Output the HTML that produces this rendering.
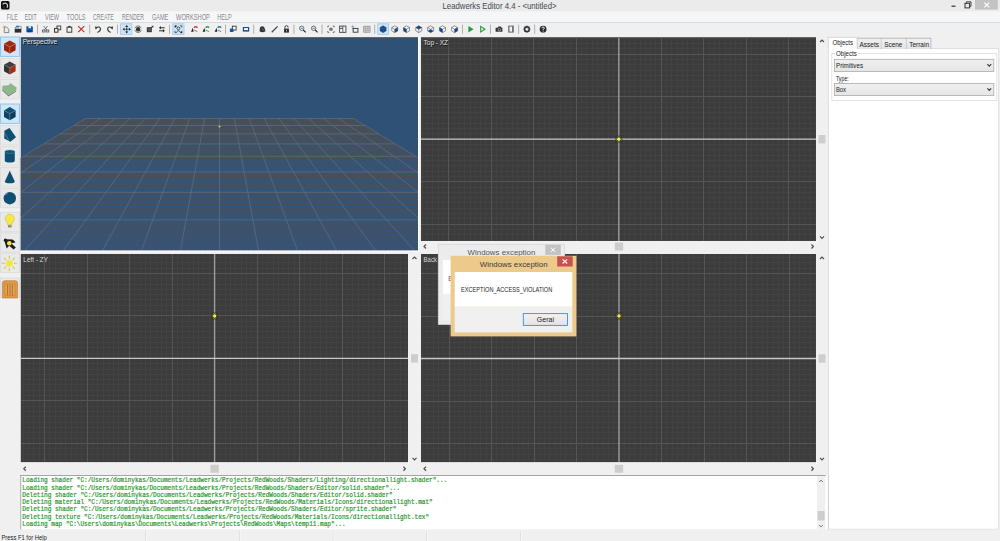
<!DOCTYPE html>
<html><head><meta charset="utf-8"><style>html,body{margin:0;padding:0;width:1000px;height:541px;overflow:hidden;background:#f0f0f0}svg{display:block}</style></head>
<body><svg width="1000" height="541" viewBox="0 0 1000 541">
<rect x="0" y="0" width="1000" height="541" fill="#f0f0f0" />
<rect x="0" y="0" width="1000" height="11.5" fill="#ebebeb" />
<rect x="1" y="1" width="8.5" height="8.5" rx="1.5" fill="#111"/>
<path d="M2.6 4.4 Q5.4 1.8 7.4 4.6 Q7.8 6 7 7.8" stroke="#cfcfcf" stroke-width="1.2" fill="none"/><path d="M3 8.6 V6 H4.6 V8.6" fill="#333"/>
<text x="442.5" y="8.9" font-family="'Liberation Sans', sans-serif" font-size="8.4" fill="#434a55" textLength="114" lengthAdjust="spacingAndGlyphs" >Leadwerks Editor 4.4 - &lt;untitled&gt;</text>
<rect x="951.5" y="5.6" width="4" height="1.2" fill="#333" />
<rect x="965" y="3.3" width="4.6" height="4.6" fill="none" stroke="#333" stroke-width="1"/>
<path d="M966.5 3.3 V1.8 H971 V6.3 H969.6" fill="none" stroke="#333" stroke-width="0.9"/>
<rect x="975" y="0" width="22.8" height="9.6" fill="#c3c3c3" />
<path d="M984.3 2.6 L989.2 7.4 M989.2 2.6 L984.3 7.4" stroke="#fff" stroke-width="1.1"/>
<rect x="0" y="11.5" width="1000" height="10.7" fill="#f5f6f7" />
<rect x="0" y="22" width="1000" height="1" fill="#dadbdc" />
<text x="6.8" y="19.7" font-family="'Liberation Sans', sans-serif" font-size="8.4" fill="#878791" textLength="10.8" lengthAdjust="spacingAndGlyphs" >FILE</text>
<text x="24.8" y="19.7" font-family="'Liberation Sans', sans-serif" font-size="8.4" fill="#878791" textLength="12.0" lengthAdjust="spacingAndGlyphs" >EDIT</text>
<text x="45" y="19.7" font-family="'Liberation Sans', sans-serif" font-size="8.4" fill="#878791" textLength="14" lengthAdjust="spacingAndGlyphs" >VIEW</text>
<text x="66.6" y="19.7" font-family="'Liberation Sans', sans-serif" font-size="8.4" fill="#878791" textLength="18.9" lengthAdjust="spacingAndGlyphs" >TOOLS</text>
<text x="93" y="19.7" font-family="'Liberation Sans', sans-serif" font-size="8.4" fill="#878791" textLength="20.8" lengthAdjust="spacingAndGlyphs" >CREATE</text>
<text x="122" y="19.7" font-family="'Liberation Sans', sans-serif" font-size="8.4" fill="#878791" textLength="22.1" lengthAdjust="spacingAndGlyphs" >RENDER</text>
<text x="151.9" y="19.7" font-family="'Liberation Sans', sans-serif" font-size="8.4" fill="#878791" textLength="16.4" lengthAdjust="spacingAndGlyphs" >GAME</text>
<text x="176" y="19.7" font-family="'Liberation Sans', sans-serif" font-size="8.4" fill="#878791" textLength="33.9" lengthAdjust="spacingAndGlyphs" >WORKSHOP</text>
<text x="217.3" y="19.7" font-family="'Liberation Sans', sans-serif" font-size="8.4" fill="#878791" textLength="14.3" lengthAdjust="spacingAndGlyphs" >HELP</text>
<rect x="37.0" y="24.6" width="0.9" height="9.2" fill="#a9a9a9" />
<rect x="89.25" y="24.6" width="0.9" height="9.2" fill="#a9a9a9" />
<rect x="117.1" y="24.6" width="0.9" height="9.2" fill="#a9a9a9" />
<rect x="169.1" y="24.6" width="0.9" height="9.2" fill="#a9a9a9" />
<rect x="225.1" y="24.6" width="0.9" height="9.2" fill="#a9a9a9" />
<rect x="253.25" y="24.6" width="0.9" height="9.2" fill="#a9a9a9" />
<rect x="293.5" y="24.6" width="0.9" height="9.2" fill="#a9a9a9" />
<rect x="321.6" y="24.6" width="0.9" height="9.2" fill="#a9a9a9" />
<rect x="374.25" y="24.6" width="0.9" height="9.2" fill="#a9a9a9" />
<rect x="462.0" y="24.6" width="0.9" height="9.2" fill="#a9a9a9" />
<rect x="490.1" y="24.6" width="0.9" height="9.2" fill="#a9a9a9" />
<rect x="518.25" y="24.6" width="0.9" height="9.2" fill="#a9a9a9" />
<rect x="534.25" y="24.6" width="0.9" height="9.2" fill="#a9a9a9" />
<rect x="120.6" y="23.8" width="11.200000000000017" height="10.6" fill="#cce4f7" stroke="#99c9ef" stroke-width="0.8"/>
<rect x="172.8" y="23.8" width="11.199999999999989" height="10.6" fill="#cce4f7" stroke="#99c9ef" stroke-width="0.8"/>
<rect x="377.7" y="23.8" width="10.699999999999989" height="10.6" fill="#cce4f7" stroke="#99c9ef" stroke-width="0.8"/>
<g transform="translate(6,29.2)"><path d="M-1.6 -2.2 H0.6 L2.8 0 V3.4 H-1.8 Z" fill="#ececec" stroke="#7a7a7a" stroke-width="0.9"/><path d="M-3.4 -1.6 L-2 -2.2 M-2.6 -3.6 L-2.2 -2.4 M-0.8 -3.4 L-1.4 -2.2" stroke="#e2a84a" stroke-width="0.8"/></g>
<g transform="translate(18.1,29.2)"><rect x="0" y="-3" width="3" height="3.4" fill="#f4f4f4" stroke="#777" stroke-width="0.7"/><path d="M-3.4 -0.4 H3.2 V3.4 H-3.4 Z" fill="#2e2e2e"/><path d="M-3 -0.8 L-0.8 -3.2" stroke="#3a86d6" stroke-width="1.3"/><circle cx="-0.4" cy="-2.8" r="0.9" fill="#1f6fc6"/></g>
<g transform="translate(29.6,29.2)"><path d="M-3.2 -3 H2.5 L3.3 -2.2 V3 H-3.2 Z" fill="#1456a8"/><rect x="-1.2" y="-3" width="2.6" height="2" fill="#e6eef8"/><rect x="-2" y="0.8" width="4" height="2.2" fill="#0d3f80"/></g>
<g transform="translate(45.6,29.2)"><path d="M-2 -3.2 L1.4 1 M2 -3.2 L-1.4 1" stroke="#555" stroke-width="0.8"/><rect x="-3.2" y="0.8" width="2.6" height="2" fill="none" stroke="#555" stroke-width="0.8"/><rect x="0.6" y="0.8" width="2.6" height="2" fill="none" stroke="#555" stroke-width="0.8"/></g>
<g transform="translate(57.75,29.2)"><rect x="-0.8" y="-3.2" width="3.8" height="3.8" fill="none" stroke="#333" stroke-width="0.9"/><rect x="-3.2" y="-0.8" width="3.4" height="3.8" fill="#f0f0f0" stroke="#333" stroke-width="1"/></g>
<g transform="translate(69.4,29.2)"><rect x="-2.4" y="-2" width="4.8" height="5" fill="none" stroke="#333" stroke-width="0.9"/><rect x="-1.2" y="-3.3" width="2.4" height="1.4" fill="#333"/></g>
<g transform="translate(81.25,29.2)"><path d="M-3 -3 L3 3 M3 -3 L-3 3" stroke="#c0311f" stroke-width="1.2"/></g>
<g transform="translate(98.1,29.2)"><path d="M-2.4 -1.6 Q1.8 -3.4 2.4 -0.4 Q2.4 2 -0.6 3.2" fill="none" stroke="#333" stroke-width="1.1"/><path d="M-3 -3 L-2.6 0.2 L-0.4 -1.4 Z" fill="#333"/></g>
<g transform="translate(110,29.2)"><path d="M2.4 -1.6 Q-1.8 -3.4 -2.4 -0.4 Q-2.4 2 0.6 3.2" fill="none" stroke="#333" stroke-width="1.1"/><path d="M3 -3 L2.6 0.2 L0.4 -1.4 Z" fill="#333"/></g>
<g transform="translate(126.7,29.2)"><path d="M0 -3 V3 M-3 0 H3" stroke="#333" stroke-width="0.6"/><path d="M0 -4.2 L-1.5 -2.2 H1.5Z M0 4.2 L-1.5 2.2 H1.5Z M-4.2 0 L-2.2 -1.5 V1.5Z M4.2 0 L2.2 -1.5 V1.5Z" fill="#2a2a2a"/><circle cx="0" cy="0" r="0.8" fill="#2a2a2a"/></g>
<g transform="translate(138.1,29.2)"><circle cx="0" cy="0" r="2.2" fill="#333"/><path d="M-3.2 -1 A3.4 3.4 0 0 1 3.2 -1 M3.2 1 A3.4 3.4 0 0 1 -3.2 1" fill="none" stroke="#555" stroke-width="0.8"/></g>
<g transform="translate(150,29.2)"><rect x="-3.2" y="-2" width="5" height="5" fill="#333"/><rect x="-2.4" y="-1.2" width="3.4" height="3.4" fill="#555"/><path d="M0.5 -0.6 L3 -3" stroke="#333" stroke-width="0.9"/><path d="M3.4 -3.4 L1.2 -3.2 L3.2 -1.2Z" fill="#333"/></g>
<g transform="translate(161.9,29.2)"><path d="M-1.4 -1.4 H2.8 M1.4 1.6 H-2.8" stroke="#2a2a2a" stroke-width="1"/><path d="M-3 -1.4 L-1 -3.2 V0.4Z M3 1.6 L1 -0.2 V3.4Z" fill="#2a2a2a"/></g>
<g transform="translate(178.4,29.2)"><path d="M-3.4 -1.6 V-3.4 H-1.6 M1.6 -3.4 H3.4 V-1.6 M3.4 1.6 V3.4 H1.6 M-1.6 3.4 H-3.4 V1.6" fill="none" stroke="#3a3a3a" stroke-width="0.8"/><path d="M-3.4 -3.4 L-2.2 -2.2" stroke="#222" stroke-width="1.2"/><circle cx="0" cy="-0.9" r="1.4" fill="none" stroke="#333" stroke-width="0.8"/><path d="M-1.8 2.6 Q0 0.2 1.8 2.6" fill="none" stroke="#333" stroke-width="0.8"/><path d="M2.4 2.4 L3.6 3.6" stroke="#222" stroke-width="1.2"/></g>
<g transform="translate(194.4,29.2)"><path d="M-3.4 2.6 L-1.6 -1.4 L-0.8 2.6Z" fill="#222"/><path d="M-0.6 0.8 L3 2.4" stroke="#666" stroke-width="0.8"/><path d="M-0.4 -1.4 Q1.4 -3.4 3.2 -1.6" fill="none" stroke="#d23a2a" stroke-width="1.3"/></g>
<g transform="translate(206,29.2)"><path d="M-3.4 2.6 L-1.6 -1.4 L-0.8 2.6Z" fill="#222"/><path d="M-0.6 0.8 L3 2.4" stroke="#666" stroke-width="0.8"/><path d="M-0.4 -1.4 Q1.4 -3.4 3.2 -1.6" fill="none" stroke="#2ea043" stroke-width="1.3"/></g>
<g transform="translate(218.1,29.2)"><path d="M-3.4 2.6 L-1.6 -1.4 L-0.8 2.6Z" fill="#222"/><path d="M-0.6 0.8 L3 2.4" stroke="#666" stroke-width="0.8"/><path d="M-0.4 -1.4 Q1.4 -3.4 3.2 -1.6" fill="none" stroke="#2a74c8" stroke-width="1.3"/></g>
<g transform="translate(233.1,29.2)"><rect x="-0.8" y="-3" width="3.8" height="3.8" fill="#fff" stroke="#333" stroke-width="0.9"/><rect x="-3.2" y="-0.6" width="3.6" height="3.4" fill="#1456a8"/></g>
<g transform="translate(246,29.2)"><rect x="-3.2" y="-2.2" width="6.4" height="4.6" fill="#1a4e86"/><rect x="-2" y="-1.1" width="4" height="2" fill="#fff"/></g>
<g transform="translate(262.5,29.2)"><path d="M-2.4 -2 Q0 -4 2 -1.5 L3 2 Q0 4 -3 2 Z" fill="#333"/><path d="M-1 -1 L2 1.6" stroke="#888" stroke-width="0.7"/></g>
<g transform="translate(274.75,29.2)"><path d="M-3 3 L1.6 -1.6" stroke="#444" stroke-width="1.3"/><path d="M1 -1.8 L2.6 -3.2 L3.2 -2.6 L1.8 -1Z" fill="#333"/></g>
<g transform="translate(286.5,29.2)"><path d="M-1.6 -0.6 V-2 Q-1.6 -3.6 0 -3.6 Q1.6 -3.6 1.6 -2 V-1.6" fill="none" stroke="#333" stroke-width="0.9"/><rect x="-2.4" y="-0.6" width="4.8" height="4" fill="#2a2a2a"/><rect x="-0.4" y="0.6" width="0.8" height="1.6" fill="#ddd"/></g>
<g transform="translate(302.5,29.2)"><circle cx="-0.8" cy="-0.9" r="2.2" fill="#e8eef6" stroke="#555" stroke-width="0.8"/><path d="M0.8 0.8 L3.2 3.2" stroke="#333" stroke-width="1.2"/><path d="M-2 -0.9 H0.4" stroke="#2a74c8" stroke-width="0.8"/></g>
<g transform="translate(314.4,29.2)"><circle cx="-0.8" cy="-0.9" r="2.2" fill="#e8eef6" stroke="#555" stroke-width="0.8"/><path d="M0.8 0.8 L3.2 3.2" stroke="#333" stroke-width="1.2"/><path d="M-2 -0.9 H0.4" stroke="#2a74c8" stroke-width="0.8"/></g>
<g transform="translate(331,29.2)"><path d="M-3.2 -1.8 V-3.2 H-1.8 M1.8 -3.2 H3.2 V-1.8 M3.2 1.8 V3.2 H1.8 M-1.8 3.2 H-3.2 V1.8" fill="none" stroke="#555" stroke-width="0.8"/><circle cx="0" cy="0" r="1.8" fill="#777"/></g>
<g transform="translate(342.75,29.2)"><rect x="-3.6" y="-3.6" width="7.2" height="7.2" fill="#444"/><rect x="-2.7" y="-2.7" width="2.4" height="1.6" fill="#ddd"/><rect x="-2.7" y="-0.3" width="2.4" height="3" fill="#f4f4f4"/><rect x="0.5" y="-2.7" width="2.2" height="5.4" fill="#f4f4f4"/></g>
<g transform="translate(354.75,29.2)"><rect x="-1.6" y="-0.8" width="4.8" height="3.8" fill="none" stroke="#333" stroke-width="0.9"/><path d="M-3.2 -2.6 Q-2 -3.8 -1.2 -2.6 Q-1.4 -1.8 -2.2 -1.4 V-0.6" fill="none" stroke="#2a74c8" stroke-width="0.9"/></g>
<g transform="translate(366.9,29.2)"><rect x="-3.2" y="-3" width="6.4" height="6" fill="#ddd" stroke="#888" stroke-width="0.7"/><path d="M-1.1 -3 V3 M1.1 -3 V3 M-3.2 -1 H3.2 M-3.2 1 H3.2" stroke="#888" stroke-width="0.5"/></g>
<g transform="translate(383.1,29.2)"><path d="M0 -3.4 L3 -1.7 V1.7 L0 3.4 L-3 1.7 V-1.7Z" fill="#f4f4f4" stroke="#555" stroke-width="0.6"/><path d="M0 -3.4 L3 -1.7 L0 0 L-3 -1.7Z" fill="#0a4a9a"/><path d="M3 -1.7 V1.7 L0 3.4 V0Z" fill="#0a4a9a"/><path d="M-3 -1.7 L0 0 V3.4 L-3 1.7Z" fill="#0a4a9a"/><path d="M0 0 V3.4 M0 0 L-3 -1.7 M0 0 L3 -1.7" stroke="#444" stroke-width="0.5"/></g>
<g transform="translate(394.75,29.2)"><path d="M0 -3.4 L3 -1.7 V1.7 L0 3.4 L-3 1.7 V-1.7Z" fill="#f4f4f4" stroke="#555" stroke-width="0.6"/><path d="M3 -1.7 V1.7 L0 3.4 V0Z" fill="#0a4a9a"/><path d="M0 0 V3.4 M0 0 L-3 -1.7 M0 0 L3 -1.7" stroke="#444" stroke-width="0.5"/></g>
<g transform="translate(406.5,29.2)"><path d="M0 -3.4 L3 -1.7 V1.7 L0 3.4 L-3 1.7 V-1.7Z" fill="#f4f4f4" stroke="#555" stroke-width="0.6"/><path d="M-3 -1.7 L0 0 V3.4 L-3 1.7Z" fill="#0a4a9a"/><path d="M0 0 V3.4 M0 0 L-3 -1.7 M0 0 L3 -1.7" stroke="#444" stroke-width="0.5"/></g>
<g transform="translate(418.75,29.2)"><path d="M0 -3.4 L3 -1.7 V1.7 L0 3.4 L-3 1.7 V-1.7Z" fill="#f4f4f4" stroke="#555" stroke-width="0.6"/><path d="M0 -3.4 L3 -1.7 L0 0 L-3 -1.7Z" fill="#0a4a9a"/><path d="M0 0 V3.4 M0 0 L-3 -1.7 M0 0 L3 -1.7" stroke="#444" stroke-width="0.5"/></g>
<g transform="translate(430.6,29.2)"><path d="M0 -3.4 L3 -1.7 V1.7 L0 3.4 L-3 1.7 V-1.7Z" fill="#f4f4f4" stroke="#555" stroke-width="0.6"/><path d="M0 0 L3 1.7 L0 3.4 L-3 1.7Z" fill="#0a4a9a"/><path d="M0 0 V3.4 M0 0 L-3 -1.7 M0 0 L3 -1.7" stroke="#444" stroke-width="0.5"/></g>
<g transform="translate(442.5,29.2)"><path d="M0 -3.4 L3 -1.7 V1.7 L0 3.4 L-3 1.7 V-1.7Z" fill="#f4f4f4" stroke="#555" stroke-width="0.6"/><path d="M-3 -1.7 L0 0 V3.4 L-3 1.7Z" fill="#0a4a9a"/><path d="M0 0 V3.4 M0 0 L-3 -1.7 M0 0 L3 -1.7" stroke="#444" stroke-width="0.5"/></g>
<g transform="translate(454.6,29.2)"><path d="M0 -3.4 L3 -1.7 V1.7 L0 3.4 L-3 1.7 V-1.7Z" fill="#f4f4f4" stroke="#555" stroke-width="0.6"/><path d="M3 -1.7 V1.7 L0 3.4 V0Z" fill="#0a4a9a"/><path d="M0 0 V3.4 M0 0 L-3 -1.7 M0 0 L3 -1.7" stroke="#444" stroke-width="0.5"/></g>
<g transform="translate(470.6,29.2)"><path d="M-2.2 -3.2 L3 0 L-2.2 3.2Z" fill="#2a9a3a"/></g>
<g transform="translate(482.5,29.2)"><path d="M-1.8 -2.8 L2.4 0 L-1.8 2.8Z" fill="none" stroke="#2a9a3a" stroke-width="1.1"/></g>
<g transform="translate(499,29.2)"><path d="M-3.4 -1.4 H-1.4 L-0.6 -2.6 H1.8 L2.6 -1.4 H3.4 V2.6 H-3.4Z" fill="#333"/><circle cx="0.4" cy="0.6" r="1.3" fill="none" stroke="#ccc" stroke-width="0.6"/></g>
<g transform="translate(511,29.2)"><rect x="-2.8" y="-3.6" width="5.6" height="7" fill="#6a6a6a"/><rect x="-1.5" y="-2.6" width="2.6" height="5" fill="#f2f2f2"/></g>
<g transform="translate(526.9,29.2)"><circle cx="0" cy="0" r="2.4" fill="none" stroke="#333" stroke-width="1.4"/><path d="M0 -3.6 V3.6 M-3.6 0 H3.6 M-2.5 -2.5 L2.5 2.5 M2.5 -2.5 L-2.5 2.5" stroke="#333" stroke-width="0.9"/><circle cx="0" cy="0" r="1.2" fill="#eee"/></g>
<g transform="translate(543.1,29.2)"><circle cx="0" cy="0" r="3.4" fill="#2a2a2a"/><path d="M-1.2 -1 Q-1.2 -2.2 0 -2.2 Q1.3 -2.2 1.2 -1 Q1.1 -0.2 0 0.3 V0.9" fill="none" stroke="#fff" stroke-width="0.9"/><rect x="-0.45" y="1.5" width="0.9" height="0.9" fill="#fff"/></g>
<rect x="0.5" y="37" width="19" height="19.4" fill="#cfe5f8" stroke="#94c5ec" stroke-width="1"/>
<rect x="0.5" y="58.3" width="19" height="19.4" fill="#e9e9e9" stroke="#dcdcdc" stroke-width="0.9"/>
<rect x="0.5" y="79.5" width="19" height="19.4" fill="#e9e9e9" stroke="#dcdcdc" stroke-width="0.9"/>
<rect x="0.5" y="104" width="19" height="19.4" fill="#cfe5f8" stroke="#94c5ec" stroke-width="1"/>
<rect x="0.5" y="125.5" width="19" height="19.4" fill="#e9e9e9" stroke="#dcdcdc" stroke-width="0.9"/>
<rect x="0.5" y="146.5" width="19" height="19.4" fill="#e9e9e9" stroke="#dcdcdc" stroke-width="0.9"/>
<rect x="0.5" y="167.5" width="19" height="19.4" fill="#e9e9e9" stroke="#dcdcdc" stroke-width="0.9"/>
<rect x="0.5" y="188.3" width="19" height="19.4" fill="#e9e9e9" stroke="#dcdcdc" stroke-width="0.9"/>
<rect x="0.5" y="212.3" width="19" height="19.4" fill="#e9e9e9" stroke="#dcdcdc" stroke-width="0.9"/>
<rect x="0.5" y="232.8" width="19" height="19.4" fill="#e9e9e9" stroke="#dcdcdc" stroke-width="0.9"/>
<rect x="0.5" y="253" width="19" height="19.4" fill="#e9e9e9" stroke="#dcdcdc" stroke-width="0.9"/>
<rect x="0.5" y="278" width="19" height="19.4" fill="#e9e9e9" stroke="#dcdcdc" stroke-width="0.9"/>
<g transform="translate(9.8,47.0)"><path d="M0 -6.6 L5.8 -3.3 L0 0.0 L-5.8 -3.3Z" fill="#a32810"/><path d="M-5.8 -3.3 L0 0.0 V6.6 L-5.8 3.3Z" fill="#9c240c"/><path d="M5.8 -3.3 L0 0.0 V6.6 L5.8 3.3Z" fill="#952209"/><path d="M0 0.0 V6.6 M0 0.0 L-5.8 -3.3 M0 0.0 L5.8 -3.3" stroke="#d88a78" stroke-width="0.4"/></g>
<g transform="translate(9.8,68.0)"><path d="M0 -6.6 L5.8 -3.3 L0 0.0 L-5.8 -3.3Z" fill="#3f3f3f"/><path d="M-5.8 -3.3 L0 0.0 V6.6 L-5.8 3.3Z" fill="#333"/><path d="M5.8 -3.3 L0 0.0 V6.6 L5.8 3.3Z" fill="#a82a14"/><path d="M0 0.0 V6.6 M0 0.0 L-5.8 -3.3 M0 0.0 L5.8 -3.3" stroke="#888" stroke-width="0.4"/></g>
<g transform="translate(9.8,89.2)"><path d="M-7.6 -0.2 L-7.6 1.4 L-1.3 7.2 L6.1 2.6 L6.9 -1.6 L6.1 1.4 L-1.3 5.9Z" fill="#7a827a"/><path d="M-7.4 -3.5 L-1.3 -3.9 L1 -6.3 L2.4 -4.7 L6.9 -1.6 L6.1 1.4 L-1.3 5.9 L-7.6 -0.2Z" fill="#8bb88b"/></g>
<g transform="translate(9.8,113.7)"><path d="M0 -6.6 L5.8 -3.3 L0 0.0 L-5.8 -3.3Z" fill="#0e4f72"/><path d="M-5.8 -3.3 L0 0.0 V6.6 L-5.8 3.3Z" fill="#0b4262"/><path d="M5.8 -3.3 L0 0.0 V6.6 L5.8 3.3Z" fill="#0a3d5c"/><path d="M0 0.0 V6.6 M0 0.0 L-5.8 -3.3 M0 0.0 L5.8 -3.3" stroke="#6fa2bf" stroke-width="0.4"/></g>
<path d="M4.4 130.7 L9.5 128 L16 137.3 L10.4 141.7 L4.2 138.6 Z" fill="#0e4f72"/><path d="M4.8 132.9 L9 140.9" stroke="#6f9cb4" stroke-width="0.6"/>
<g transform="translate(9.8,156.2)"><path d="M-5 -4.5 V4.5 A5 1.8 0 0 0 5 4.5 V-4.5Z" fill="#0e4f72"/><ellipse cx="0" cy="-4.5" rx="5" ry="1.8" fill="#105678" stroke="#6fa2bf" stroke-width="0.4"/></g>
<g transform="translate(9.8,177.2)"><path d="M0 -6.5 L-5 4.2 A5 1.8 0 0 0 5 4.2Z" fill="#0e4f72"/></g>
<g transform="translate(9.8,198.0)"><circle cx="0" cy="0.2" r="6.2" fill="#0e4f72"/><path d="M-4.6 -2.6 A5.2 5.2 0 0 1 -2 -5" stroke="#9fc4d8" stroke-width="0.7" fill="none"/></g>
<g transform="translate(9.8,222.0)"><path d="M-2 3 Q-2 1 -3.5 -0.5 A4.5 4.5 0 1 1 3.5 -0.5 Q2 1 2 3Z" fill="#f6e84a" stroke="#b8a830" stroke-width="0.4"/><rect x="-1.8" y="3.2" width="3.6" height="2.2" fill="#888"/></g>
<path d="M4 239.2 L12.6 239.6 L15.6 242.2 L11.4 243.6 L15.8 247.6 L13.6 249.6 L9.2 245.8 L6.6 248.6 Z" fill="#1c1c1c"/><circle cx="5.4" cy="240.2" r="1.6" fill="#1c1c1c"/><circle cx="9.3" cy="243.3" r="2.3" fill="#f2e43c"/>
<g transform="translate(9.3,263.3)"><path d="M4.60 0.00 L7.60 0.00" stroke="#d6c840" stroke-width="1.1"/><path d="M3.25 3.25 L5.37 5.37" stroke="#d6c840" stroke-width="1.1"/><path d="M0.00 4.60 L0.00 7.60" stroke="#d6c840" stroke-width="1.1"/><path d="M-3.25 3.25 L-5.37 5.37" stroke="#d6c840" stroke-width="1.1"/><path d="M-4.60 0.00 L-7.60 0.00" stroke="#d6c840" stroke-width="1.1"/><path d="M-3.25 -3.25 L-5.37 -5.37" stroke="#d6c840" stroke-width="1.1"/><path d="M-0.00 -4.60 L-0.00 -7.60" stroke="#d6c840" stroke-width="1.1"/><path d="M3.25 -3.25 L5.37 -5.37" stroke="#d6c840" stroke-width="1.1"/><circle cx="0" cy="0" r="3.4" fill="#f4e640"/></g>
<path d="M2.4 298 V283 Q2.4 280.7 5 280.7 H15 Q17.6 280.7 17.6 283 V298Z" fill="#dd9a48" stroke="#b8782e" stroke-width="0.6"/><rect x="5" y="284" width="10" height="11.3" fill="#e6a656" stroke="#b8782e" stroke-width="0.5"/><path d="M7.6 284.5 V295 M10 284.5 V295 M12.4 284.5 V295" stroke="#a66a28" stroke-width="0.9"/>
<clipPath id="cp"><rect x="20.8" y="37.6" width="397.2" height="212.9"/></clipPath>
<rect x="20.8" y="37.6" width="397.2" height="212.9" fill="#2f5176" />
<g clip-path="url(#cp)">
<path d="M85.40 118.50 L353.60 118.50 L573.82 252.50 L-134.82 252.50Z" fill="#34547a"/>
<path d="M83.76 119.50H355.24M82.11 120.50H356.89M82.11 120.50H356.89M80.47 121.50H358.53M78.82 122.50H360.18M77.18 123.50H361.82M75.54 124.50H363.46M72.25 126.50H366.75M70.61 127.50H368.39M68.96 128.50H370.04M67.32 129.50H371.68M65.68 130.50H373.32M64.03 131.50H374.97M62.39 132.50H376.61M59.10 134.50H379.90M55.82 136.50H383.18M54.17 137.50H384.83M52.53 138.50H386.47M50.89 139.50H388.11M47.60 141.50H391.40M45.96 142.50H393.04M41.03 145.50H397.97M39.38 146.50H399.62M36.10 148.50H402.90M34.45 149.50H404.55M31.17 151.50H407.83M29.52 152.50H409.48M26.24 154.50H412.76M19.66 158.50H419.34M18.02 159.50H420.98M14.73 161.50H424.27M11.45 163.50H427.55M8.16 165.50H430.84M4.87 167.50H434.13M1.59 169.50H437.41M-6.63 174.50H445.63M-9.92 176.50H448.92M-13.21 178.50H452.21M-18.14 181.50H457.14M-21.42 183.50H460.42M-26.35 186.50H465.35M-31.28 189.50H470.28M-41.14 195.50H480.14M-46.07 198.50H485.07M-51.00 201.50H490.00M-55.93 204.50H494.93M-62.51 208.50H501.51M-69.08 212.50H508.08M-74.01 215.50H513.01M-88.80 224.50H527.80M-95.38 228.50H534.38M-101.95 232.50H540.95M-110.17 237.50H549.17M-118.38 242.50H557.38M-126.60 247.50H565.60M87.26 118.50L-129.90 252.50M89.12 118.50L-124.97 252.50M90.99 118.50L-120.05 252.50M92.85 118.50L-115.13 252.50M94.71 118.50L-110.21 252.50M96.57 118.50L-105.29 252.50M98.44 118.50L-100.37 252.50M102.16 118.50L-90.53 252.50M104.02 118.50L-85.61 252.50M105.89 118.50L-80.69 252.50M107.75 118.50L-75.76 252.50M109.61 118.50L-70.84 252.50M111.47 118.50L-65.92 252.50M113.34 118.50L-61.00 252.50M117.06 118.50L-51.16 252.50M118.92 118.50L-46.24 252.50M120.79 118.50L-41.32 252.50M122.65 118.50L-36.40 252.50M124.51 118.50L-31.47 252.50M126.37 118.50L-26.55 252.50M128.24 118.50L-21.63 252.50M131.96 118.50L-11.79 252.50M133.82 118.50L-6.87 252.50M135.69 118.50L-1.95 252.50M137.55 118.50L2.97 252.50M139.41 118.50L7.89 252.50M141.27 118.50L12.82 252.50M143.14 118.50L17.74 252.50M146.86 118.50L27.58 252.50M148.72 118.50L32.50 252.50M150.59 118.50L37.42 252.50M152.45 118.50L42.34 252.50M154.31 118.50L47.26 252.50M156.17 118.50L52.18 252.50M158.04 118.50L57.10 252.50M161.76 118.50L66.95 252.50M163.62 118.50L71.87 252.50M165.49 118.50L76.79 252.50M167.35 118.50L81.71 252.50M169.21 118.50L86.63 252.50M171.07 118.50L91.55 252.50M172.94 118.50L96.47 252.50M176.66 118.50L106.32 252.50M178.52 118.50L111.24 252.50M180.39 118.50L116.16 252.50M182.25 118.50L121.08 252.50M184.11 118.50L126.00 252.50M185.97 118.50L130.92 252.50M187.84 118.50L135.84 252.50M191.56 118.50L145.68 252.50M193.42 118.50L150.61 252.50M195.29 118.50L155.53 252.50M197.15 118.50L160.45 252.50M199.01 118.50L165.37 252.50M200.87 118.50L170.29 252.50M202.74 118.50L175.21 252.50M206.46 118.50L185.05 252.50M208.32 118.50L189.97 252.50M210.19 118.50L194.89 252.50M212.05 118.50L199.82 252.50M213.91 118.50L204.74 252.50M215.77 118.50L209.66 252.50M217.64 118.50L214.58 252.50M221.36 118.50L224.42 252.50M223.23 118.50L229.34 252.50M225.09 118.50L234.26 252.50M226.95 118.50L239.18 252.50M228.81 118.50L244.11 252.50M230.68 118.50L249.03 252.50M232.54 118.50L253.95 252.50M236.26 118.50L263.79 252.50M238.13 118.50L268.71 252.50M239.99 118.50L273.63 252.50M241.85 118.50L278.55 252.50M243.71 118.50L283.47 252.50M245.58 118.50L288.39 252.50M247.44 118.50L293.32 252.50M251.16 118.50L303.16 252.50M253.03 118.50L308.08 252.50M254.89 118.50L313.00 252.50M256.75 118.50L317.92 252.50M258.61 118.50L322.84 252.50M260.48 118.50L327.76 252.50M262.34 118.50L332.68 252.50M266.06 118.50L342.53 252.50M267.93 118.50L347.45 252.50M269.79 118.50L352.37 252.50M271.65 118.50L357.29 252.50M273.51 118.50L362.21 252.50M275.38 118.50L367.13 252.50M277.24 118.50L372.05 252.50M280.96 118.50L381.90 252.50M282.83 118.50L386.82 252.50M284.69 118.50L391.74 252.50M286.55 118.50L396.66 252.50M288.41 118.50L401.58 252.50M290.28 118.50L406.50 252.50M292.14 118.50L411.42 252.50M295.86 118.50L421.26 252.50M297.73 118.50L426.18 252.50M299.59 118.50L431.11 252.50M301.45 118.50L436.03 252.50M303.31 118.50L440.95 252.50M305.18 118.50L445.87 252.50M307.04 118.50L450.79 252.50M310.76 118.50L460.63 252.50M312.63 118.50L465.55 252.50M314.49 118.50L470.47 252.50M316.35 118.50L475.40 252.50M318.21 118.50L480.32 252.50M320.08 118.50L485.24 252.50M321.94 118.50L490.16 252.50M325.66 118.50L500.00 252.50M327.53 118.50L504.92 252.50M329.39 118.50L509.84 252.50M331.25 118.50L514.76 252.50M333.11 118.50L519.69 252.50M334.98 118.50L524.61 252.50M336.84 118.50L529.53 252.50M340.56 118.50L539.37 252.50M342.43 118.50L544.29 252.50M344.29 118.50L549.21 252.50M346.15 118.50L554.13 252.50M348.01 118.50L559.05 252.50M349.88 118.50L563.97 252.50M351.74 118.50L568.90 252.50" stroke="#4b4f55" stroke-width="1" fill="none" opacity="0.72"/>
<path d="M85.40 118.50H353.60M73.87 125.51H365.13M60.18 133.85H378.82M43.64 143.91H395.36M23.27 156.30H415.73M-2.43 171.94H441.43M-35.88 192.30H474.88M-81.21 219.88H520.21M85.40 118.50L-134.82 252.50M100.30 118.50L-95.45 252.50M115.20 118.50L-56.08 252.50M130.10 118.50L-16.71 252.50M145.00 118.50L22.66 252.50M159.90 118.50L62.03 252.50M174.80 118.50L101.39 252.50M189.70 118.50L140.76 252.50M204.60 118.50L180.13 252.50M219.50 118.50L219.50 252.50M234.40 118.50L258.87 252.50M249.30 118.50L298.24 252.50M264.20 118.50L337.61 252.50M279.10 118.50L376.97 252.50M294.00 118.50L416.34 252.50M308.90 118.50L455.71 252.50M323.80 118.50L495.08 252.50M338.70 118.50L534.45 252.50M353.60 118.50L573.82 252.50" stroke="#646c76" stroke-width="0.75" fill="none"/>
</g>
<circle cx="219.5" cy="126.5" r="0.9" fill="#e8d040"/>
<text x="23.400000000000002" y="45.1" font-family="'Liberation Sans', sans-serif" font-size="6.8" fill="#000" textLength="34.6" lengthAdjust="spacingAndGlyphs" opacity="0.9">Perspective</text>
<text x="22.7" y="44.4" font-family="'Liberation Sans', sans-serif" font-size="6.8" fill="#e4e4e4" textLength="34.6" lengthAdjust="spacingAndGlyphs" >Perspective</text>
<rect x="20.8" y="37.0" width="397.2" height="0.8" fill="#555" />
<rect x="20.8" y="250.5" width="398.2" height="1.1" fill="#ffffff" />
<rect x="418" y="37.6" width="1.1" height="213.9" fill="#ffffff" />
<clipPath id="ct"><rect x="421" y="37.6" width="395" height="203.4"/></clipPath>
<rect x="421" y="37.6" width="395" height="203.4" fill="#3c3c3c" />
<g clip-path="url(#ct)">
<path d="M416.50 37.6V241M422.50 37.6V241M427.50 37.6V241M432.50 37.6V241M438.50 37.6V241M443.50 37.6V241M454.50 37.6V241M459.50 37.6V241M464.50 37.6V241M470.50 37.6V241M475.50 37.6V241M480.50 37.6V241M485.50 37.6V241M496.50 37.6V241M501.50 37.6V241M507.50 37.6V241M512.50 37.6V241M517.50 37.6V241M523.50 37.6V241M528.50 37.6V241M539.50 37.6V241M544.50 37.6V241M549.50 37.6V241M555.50 37.6V241M560.50 37.6V241M565.50 37.6V241M570.50 37.6V241M581.50 37.6V241M586.50 37.6V241M592.50 37.6V241M597.50 37.6V241M602.50 37.6V241M608.50 37.6V241M613.50 37.6V241M624.50 37.6V241M629.50 37.6V241M634.50 37.6V241M640.50 37.6V241M645.50 37.6V241M650.50 37.6V241M655.50 37.6V241M666.50 37.6V241M671.50 37.6V241M677.50 37.6V241M682.50 37.6V241M687.50 37.6V241M693.50 37.6V241M698.50 37.6V241M709.50 37.6V241M714.50 37.6V241M719.50 37.6V241M725.50 37.6V241M730.50 37.6V241M735.50 37.6V241M740.50 37.6V241M751.50 37.6V241M756.50 37.6V241M762.50 37.6V241M767.50 37.6V241M772.50 37.6V241M778.50 37.6V241M783.50 37.6V241M794.50 37.6V241M799.50 37.6V241M804.50 37.6V241M810.50 37.6V241M815.50 37.6V241M820.50 37.6V241M421 32.50H816M421 38.50H816M421 43.50H816M421 48.50H816M421 59.50H816M421 64.50H816M421 70.50H816M421 75.50H816M421 80.50H816M421 86.50H816M421 91.50H816M421 102.50H816M421 107.50H816M421 112.50H816M421 117.50H816M421 123.50H816M421 128.50H816M421 133.50H816M421 144.50H816M421 149.50H816M421 155.50H816M421 160.50H816M421 165.50H816M421 171.50H816M421 176.50H816M421 187.50H816M421 192.50H816M421 197.50H816M421 202.50H816M421 208.50H816M421 213.50H816M421 218.50H816M421 229.50H816M421 234.50H816M421 240.50H816M421 245.50H816" stroke="#424242" stroke-width="1" fill="none"/>
<path d="M406.50 37.6V241M448.50 37.6V241M491.50 37.6V241M533.50 37.6V241M576.50 37.6V241M661.50 37.6V241M703.50 37.6V241M746.50 37.6V241M788.50 37.6V241M831.50 37.6V241M421 11.50H816M421 54.50H816M421 96.50H816M421 181.50H816M421 224.50H816M421 266.50H816" stroke="#555555" stroke-width="1" fill="none"/>
<path d="M618.8 37.6V241" stroke="#a0a0a0" stroke-width="1.35" fill="none"/>
<path d="M421 139.2H816" stroke="#c8c8c8" stroke-width="1.3" fill="none"/>
</g>
<rect x="816" y="37.6" width="1.2" height="204.6" fill="#ffffff" />
<rect x="421" y="241" width="396.2" height="1.2" fill="#ffffff" />
<text x="424.0" y="45.6" font-family="'Liberation Sans', sans-serif" font-size="7" fill="#000" textLength="24.6" lengthAdjust="spacingAndGlyphs" opacity="0.8">Top - XZ</text>
<text x="423.5" y="45.1" font-family="'Liberation Sans', sans-serif" font-size="7" fill="#e2e2e2" textLength="24.6" lengthAdjust="spacingAndGlyphs" >Top - XZ</text>
<circle cx="618.8" cy="139.2" r="3.6" fill="#1e1e1e" opacity="0.55"/><path d="M620.46 139.89 L621.76 140.42" stroke="#8a8a30" stroke-width="0.8"/><path d="M619.49 140.86 L620.02 142.16" stroke="#8a8a30" stroke-width="0.8"/><path d="M618.11 140.86 L617.58 142.16" stroke="#8a8a30" stroke-width="0.8"/><path d="M617.14 139.89 L615.84 140.42" stroke="#8a8a30" stroke-width="0.8"/><path d="M617.14 138.51 L615.84 137.98" stroke="#8a8a30" stroke-width="0.8"/><path d="M618.11 137.54 L617.58 136.24" stroke="#8a8a30" stroke-width="0.8"/><path d="M619.49 137.54 L620.02 136.24" stroke="#8a8a30" stroke-width="0.8"/><path d="M620.46 138.51 L621.76 137.98" stroke="#8a8a30" stroke-width="0.8"/><circle cx="618.8" cy="139.2" r="1.6" fill="#f4f050"/>
<rect x="816" y="37" width="12" height="204" fill="#f0f0f0" />
<path d="M820.0 42.0 L822.0 40.0 L824.0 42.0" stroke="#505050" stroke-width="1.2" fill="none"/>
<path d="M820.0 236.4 L822.0 238.4 L824.0 236.4" stroke="#505050" stroke-width="1.2" fill="none"/>
<rect x="818.5" y="135.0" width="7" height="8.4" fill="#cdcdcd" />
<rect x="421" y="241" width="395" height="11" fill="#f0f0f0" />
<path d="M426 244.5 L424 246.5 L426 248.5" stroke="#505050" stroke-width="1.2" fill="none"/>
<path d="M811.4 244.5 L813.4 246.5 L811.4 248.5" stroke="#505050" stroke-width="1.2" fill="none"/>
<rect x="614.8" y="242.5" width="8.4" height="8" fill="#cdcdcd" />
<rect x="421" y="37" width="395" height="0.8" fill="#555" />
<clipPath id="cl"><rect x="20.8" y="254" width="387.2" height="208.5"/></clipPath>
<rect x="20.8" y="254" width="387.2" height="208.5" fill="#3c3c3c" />
<g clip-path="url(#cl)">
<path d="M18.50 254V462.5M23.50 254V462.5M28.50 254V462.5M33.50 254V462.5M39.50 254V462.5M49.50 254V462.5M55.50 254V462.5M60.50 254V462.5M65.50 254V462.5M71.50 254V462.5M76.50 254V462.5M81.50 254V462.5M92.50 254V462.5M97.50 254V462.5M103.50 254V462.5M108.50 254V462.5M113.50 254V462.5M118.50 254V462.5M124.50 254V462.5M134.50 254V462.5M140.50 254V462.5M145.50 254V462.5M150.50 254V462.5M156.50 254V462.5M161.50 254V462.5M166.50 254V462.5M177.50 254V462.5M182.50 254V462.5M188.50 254V462.5M193.50 254V462.5M198.50 254V462.5M203.50 254V462.5M209.50 254V462.5M219.50 254V462.5M225.50 254V462.5M230.50 254V462.5M235.50 254V462.5M241.50 254V462.5M246.50 254V462.5M251.50 254V462.5M262.50 254V462.5M267.50 254V462.5M273.50 254V462.5M278.50 254V462.5M283.50 254V462.5M288.50 254V462.5M294.50 254V462.5M304.50 254V462.5M310.50 254V462.5M315.50 254V462.5M320.50 254V462.5M326.50 254V462.5M331.50 254V462.5M336.50 254V462.5M347.50 254V462.5M352.50 254V462.5M358.50 254V462.5M363.50 254V462.5M368.50 254V462.5M373.50 254V462.5M379.50 254V462.5M389.50 254V462.5M395.50 254V462.5M400.50 254V462.5M405.50 254V462.5M411.50 254V462.5M20.8 252.50H408M20.8 257.50H408M20.8 262.50H408M20.8 268.50H408M20.8 278.50H408M20.8 284.50H408M20.8 289.50H408M20.8 294.50H408M20.8 299.50H408M20.8 305.50H408M20.8 310.50H408M20.8 321.50H408M20.8 326.50H408M20.8 331.50H408M20.8 337.50H408M20.8 342.50H408M20.8 347.50H408M20.8 353.50H408M20.8 363.50H408M20.8 369.50H408M20.8 374.50H408M20.8 379.50H408M20.8 384.50H408M20.8 390.50H408M20.8 395.50H408M20.8 406.50H408M20.8 411.50H408M20.8 416.50H408M20.8 422.50H408M20.8 427.50H408M20.8 432.50H408M20.8 438.50H408M20.8 448.50H408M20.8 454.50H408M20.8 459.50H408M20.8 464.50H408" stroke="#424242" stroke-width="1" fill="none"/>
<path d="M2.50 254V462.5M44.50 254V462.5M87.50 254V462.5M129.50 254V462.5M172.50 254V462.5M257.50 254V462.5M299.50 254V462.5M342.50 254V462.5M384.50 254V462.5M427.50 254V462.5M20.8 230.50H408M20.8 273.50H408M20.8 315.50H408M20.8 400.50H408M20.8 443.50H408M20.8 485.50H408" stroke="#555555" stroke-width="1" fill="none"/>
<path d="M214.6 254V462.5" stroke="#a0a0a0" stroke-width="1.35" fill="none"/>
<path d="M20.8 358.4H408" stroke="#c8c8c8" stroke-width="1.3" fill="none"/>
</g>
<rect x="408" y="254" width="1.2" height="209.7" fill="#ffffff" />
<rect x="20.8" y="462.5" width="388.4" height="1.2" fill="#ffffff" />
<text x="23.8" y="262.0" font-family="'Liberation Sans', sans-serif" font-size="7" fill="#000" textLength="24.8" lengthAdjust="spacingAndGlyphs" opacity="0.8">Left - ZY</text>
<text x="23.3" y="261.5" font-family="'Liberation Sans', sans-serif" font-size="7" fill="#e2e2e2" textLength="24.8" lengthAdjust="spacingAndGlyphs" >Left - ZY</text>
<circle cx="214.6" cy="315.9" r="3.6" fill="#1e1e1e" opacity="0.55"/><path d="M216.26 316.59 L217.56 317.12" stroke="#8a8a30" stroke-width="0.8"/><path d="M215.29 317.56 L215.82 318.86" stroke="#8a8a30" stroke-width="0.8"/><path d="M213.91 317.56 L213.38 318.86" stroke="#8a8a30" stroke-width="0.8"/><path d="M212.94 316.59 L211.64 317.12" stroke="#8a8a30" stroke-width="0.8"/><path d="M212.94 315.21 L211.64 314.68" stroke="#8a8a30" stroke-width="0.8"/><path d="M213.91 314.24 L213.38 312.94" stroke="#8a8a30" stroke-width="0.8"/><path d="M215.29 314.24 L215.82 312.94" stroke="#8a8a30" stroke-width="0.8"/><path d="M216.26 315.21 L217.56 314.68" stroke="#8a8a30" stroke-width="0.8"/><circle cx="214.6" cy="315.9" r="1.6" fill="#f4f050"/>
<rect x="408" y="254" width="13" height="208.5" fill="#f0f0f0" />
<path d="M412.5 259.0 L414.5 257.0 L416.5 259.0" stroke="#505050" stroke-width="1.2" fill="none"/>
<path d="M412.5 457.9 L414.5 459.9 L416.5 457.9" stroke="#505050" stroke-width="1.2" fill="none"/>
<rect x="411.0" y="354.2" width="7" height="8.4" fill="#cdcdcd" />
<rect x="20.8" y="462.5" width="387.2" height="12.5" fill="#f0f0f0" />
<path d="M25.8 466.75 L23.8 468.75 L25.8 470.75" stroke="#505050" stroke-width="1.2" fill="none"/>
<path d="M403.4 466.75 L405.4 468.75 L403.4 470.75" stroke="#505050" stroke-width="1.2" fill="none"/>
<rect x="210.4" y="464.75" width="8.4" height="8" fill="#cdcdcd" />
<clipPath id="cb"><rect x="421" y="254" width="395" height="208.5"/></clipPath>
<rect x="421" y="254" width="395" height="208.5" fill="#3c3c3c" />
<g clip-path="url(#cb)">
<path d="M417.50 254V462.5M422.50 254V462.5M427.50 254V462.5M433.50 254V462.5M438.50 254V462.5M443.50 254V462.5M454.50 254V462.5M459.50 254V462.5M464.50 254V462.5M470.50 254V462.5M475.50 254V462.5M480.50 254V462.5M486.50 254V462.5M496.50 254V462.5M502.50 254V462.5M507.50 254V462.5M512.50 254V462.5M518.50 254V462.5M523.50 254V462.5M528.50 254V462.5M539.50 254V462.5M544.50 254V462.5M549.50 254V462.5M555.50 254V462.5M560.50 254V462.5M565.50 254V462.5M571.50 254V462.5M581.50 254V462.5M587.50 254V462.5M592.50 254V462.5M597.50 254V462.5M603.50 254V462.5M608.50 254V462.5M613.50 254V462.5M624.50 254V462.5M629.50 254V462.5M634.50 254V462.5M640.50 254V462.5M645.50 254V462.5M650.50 254V462.5M656.50 254V462.5M666.50 254V462.5M672.50 254V462.5M677.50 254V462.5M682.50 254V462.5M688.50 254V462.5M693.50 254V462.5M698.50 254V462.5M709.50 254V462.5M714.50 254V462.5M719.50 254V462.5M725.50 254V462.5M730.50 254V462.5M735.50 254V462.5M741.50 254V462.5M751.50 254V462.5M757.50 254V462.5M762.50 254V462.5M767.50 254V462.5M773.50 254V462.5M778.50 254V462.5M783.50 254V462.5M794.50 254V462.5M799.50 254V462.5M804.50 254V462.5M810.50 254V462.5M815.50 254V462.5M820.50 254V462.5M421 252.50H816M421 257.50H816M421 262.50H816M421 268.50H816M421 278.50H816M421 284.50H816M421 289.50H816M421 294.50H816M421 300.50H816M421 305.50H816M421 310.50H816M421 321.50H816M421 326.50H816M421 331.50H816M421 337.50H816M421 342.50H816M421 347.50H816M421 353.50H816M421 363.50H816M421 369.50H816M421 374.50H816M421 379.50H816M421 385.50H816M421 390.50H816M421 395.50H816M421 406.50H816M421 411.50H816M421 416.50H816M421 422.50H816M421 427.50H816M421 432.50H816M421 438.50H816M421 448.50H816M421 454.50H816M421 459.50H816M421 464.50H816" stroke="#424242" stroke-width="1" fill="none"/>
<path d="M406.50 254V462.5M449.50 254V462.5M491.50 254V462.5M534.50 254V462.5M576.50 254V462.5M661.50 254V462.5M704.50 254V462.5M746.50 254V462.5M789.50 254V462.5M831.50 254V462.5M421 231.50H816M421 273.50H816M421 316.50H816M421 401.50H816M421 443.50H816M421 486.50H816" stroke="#555555" stroke-width="1" fill="none"/>
<path d="M619 254V462.5" stroke="#a0a0a0" stroke-width="1.35" fill="none"/>
<path d="M421 358.5H816" stroke="#c8c8c8" stroke-width="1.3" fill="none"/>
</g>
<rect x="816" y="254" width="1.2" height="209.7" fill="#ffffff" />
<rect x="421" y="462.5" width="396.2" height="1.2" fill="#ffffff" />
<text x="424.0" y="262.0" font-family="'Liberation Sans', sans-serif" font-size="7" fill="#000" textLength="27" lengthAdjust="spacingAndGlyphs" opacity="0.8">Back - XY</text>
<text x="423.5" y="261.5" font-family="'Liberation Sans', sans-serif" font-size="7" fill="#e2e2e2" textLength="27" lengthAdjust="spacingAndGlyphs" >Back - XY</text>
<circle cx="619" cy="315.9" r="3.6" fill="#1e1e1e" opacity="0.55"/><path d="M620.66 316.59 L621.96 317.12" stroke="#8a8a30" stroke-width="0.8"/><path d="M619.69 317.56 L620.22 318.86" stroke="#8a8a30" stroke-width="0.8"/><path d="M618.31 317.56 L617.78 318.86" stroke="#8a8a30" stroke-width="0.8"/><path d="M617.34 316.59 L616.04 317.12" stroke="#8a8a30" stroke-width="0.8"/><path d="M617.34 315.21 L616.04 314.68" stroke="#8a8a30" stroke-width="0.8"/><path d="M618.31 314.24 L617.78 312.94" stroke="#8a8a30" stroke-width="0.8"/><path d="M619.69 314.24 L620.22 312.94" stroke="#8a8a30" stroke-width="0.8"/><path d="M620.66 315.21 L621.96 314.68" stroke="#8a8a30" stroke-width="0.8"/><circle cx="619" cy="315.9" r="1.6" fill="#f4f050"/>
<rect x="816" y="254" width="12" height="208.5" fill="#f0f0f0" />
<path d="M820.0 259.0 L822.0 257.0 L824.0 259.0" stroke="#505050" stroke-width="1.2" fill="none"/>
<path d="M820.0 457.9 L822.0 459.9 L824.0 457.9" stroke="#505050" stroke-width="1.2" fill="none"/>
<rect x="818.5" y="354.3" width="7" height="8.4" fill="#cdcdcd" />
<rect x="421" y="462.5" width="395" height="12.5" fill="#f0f0f0" />
<path d="M426 466.75 L424 468.75 L426 470.75" stroke="#505050" stroke-width="1.2" fill="none"/>
<path d="M811.4 466.75 L813.4 468.75 L811.4 470.75" stroke="#505050" stroke-width="1.2" fill="none"/>
<rect x="614.8" y="464.75" width="8.4" height="8" fill="#cdcdcd" />
<rect x="438.3" y="244.3" width="126.1" height="80.1" fill="#ececec" stroke="#d9d9d9" stroke-width="0.8" />
<rect x="545.3" y="244.7" width="15.5" height="10.2" fill="#c3c3c3" />
<path d="M550.9 247.7 L555.2 252 M555.2 247.7 L550.9 252" stroke="#fff" stroke-width="1"/>
<text x="467.6" y="255.2" font-family="'Liberation Sans', sans-serif" font-size="8" fill="#555" textLength="67.7" lengthAdjust="spacingAndGlyphs" >Windows exception</text>
<rect x="442.8" y="259.9" width="118" height="34" fill="#ffffff" />
<rect x="442.8" y="294" width="118" height="26.5" fill="#f0f0f0" />
<text x="448.2" y="280.5" font-family="'Liberation Sans', sans-serif" font-size="6.5" fill="#7a4a36" >E</text>
<rect x="450.6" y="255.8" width="125.8" height="80.6" fill="#ebca8c" />
<rect x="557.2" y="256.3" width="15.5" height="10.2" fill="#c75050" />
<path d="M562.6 259.3 L567.2 263.5 M567.2 259.3 L562.6 263.5" stroke="#fff" stroke-width="1.1"/>
<text x="479.8" y="266.6" font-family="'Liberation Sans', sans-serif" font-size="8" fill="#3b3b3b" textLength="67.7" lengthAdjust="spacingAndGlyphs" >Windows exception</text>
<rect x="454.7" y="272" width="117.6" height="34.8" fill="#ffffff" />
<rect x="454.7" y="306.8" width="117.6" height="25.6" fill="#f0f0f0" />
<text x="461" y="291.8" font-family="'Liberation Sans', sans-serif" font-size="6.6" fill="#1e1e1e" textLength="91.3" lengthAdjust="spacingAndGlyphs" >EXCEPTION_ACCESS_VIOLATION</text>
<defs><linearGradient id="gb" x1="0" y1="0" x2="0" y2="1"><stop offset="0" stop-color="#f2f2f2"/><stop offset="1" stop-color="#e3e3e3"/></linearGradient></defs>
<rect x="523.3" y="313.6" width="44.2" height="11.8" fill="url(#gb)" stroke="#3c8ddc" stroke-width="0.9"/>
<text x="545.4" y="321.9" font-family="'Liberation Sans', sans-serif" font-size="7" fill="#1a1a1a" text-anchor="middle" >Gerai</text>
<rect x="828.3" y="48.6" width="170.4" height="480.6" fill="#ffffff" stroke="#d9d9d9" stroke-width="0.8" />
<path d="M857.1 48.6 V38.3 H881.1 V48.6 M881.1 38.3 H906.2 V48.6 M906.2 38.3 H930.8 V48.6" fill="none" stroke="#a0a0a0" stroke-width="0.9"/>
<defs><linearGradient id="tg" x1="0" y1="0" x2="0" y2="1"><stop offset="0" stop-color="#f0f0f0"/><stop offset="1" stop-color="#e5e5e5"/></linearGradient></defs>
<rect x="857.5" y="38.7" width="23.2" height="9.6" fill="url(#tg)"/>
<rect x="881.5" y="38.7" width="24.300000000000022" height="9.6" fill="url(#tg)"/>
<rect x="906.6" y="38.7" width="23.79999999999991" height="9.6" fill="url(#tg)"/>
<path d="M828.3 49 V37.4 H857.1 V49" fill="#fff" stroke="#d0d0d0" stroke-width="0.8"/>
<rect x="828.7" y="47.8" width="28" height="1.6" fill="#fff" />
<text x="832.5" y="45.4" font-family="'Liberation Sans', sans-serif" font-size="7" fill="#1a1a1a" textLength="20.5" lengthAdjust="spacingAndGlyphs" >Objects</text>
<text x="859.5" y="46.5" font-family="'Liberation Sans', sans-serif" font-size="7" fill="#1a1a1a" textLength="19.5" lengthAdjust="spacingAndGlyphs" >Assets</text>
<text x="884.2" y="46.5" font-family="'Liberation Sans', sans-serif" font-size="7" fill="#1a1a1a" textLength="18.2" lengthAdjust="spacingAndGlyphs" >Scene</text>
<text x="909.2" y="46.5" font-family="'Liberation Sans', sans-serif" font-size="7" fill="#1a1a1a" textLength="19.8" lengthAdjust="spacingAndGlyphs" >Terrain</text>
<rect x="831.8" y="53.4" width="165" height="47.1" fill="none" stroke="#dcdcdc" stroke-width="0.8"/>
<rect x="835" y="50" width="23" height="6" fill="#fff" />
<text x="835.9" y="55.9" font-family="'Liberation Sans', sans-serif" font-size="7" fill="#1a1a1a" textLength="21" lengthAdjust="spacingAndGlyphs" >Objects</text>
<rect x="834.4" y="59.3" width="159.4" height="12.1" fill="url(#tg)" stroke="#acacac" stroke-width="0.8"/>
<text x="836" y="68.2" font-family="'Liberation Sans', sans-serif" font-size="7" fill="#1a1a1a" textLength="27" lengthAdjust="spacingAndGlyphs" >Primitives</text>
<path d="M987.4 64.2 L989.3 66.2 L991.2 64.2" stroke="#3a3a3a" stroke-width="1.15" fill="none"/>
<rect x="834.4" y="83.5" width="159.4" height="12.1" fill="url(#tg)" stroke="#acacac" stroke-width="0.8"/>
<text x="836" y="92.4" font-family="'Liberation Sans', sans-serif" font-size="7" fill="#1a1a1a" textLength="10" lengthAdjust="spacingAndGlyphs" >Box</text>
<path d="M987.4 88.4 L989.3 90.4 L991.2 88.4" stroke="#3a3a3a" stroke-width="1.15" fill="none"/>
<text x="835.9" y="80.8" font-family="'Liberation Sans', sans-serif" font-size="7" fill="#1a1a1a" textLength="12.9" lengthAdjust="spacingAndGlyphs" >Type:</text>
<rect x="20.3" y="475" width="807.7" height="54.5" fill="#ffffff" />
<rect x="827.9" y="475" width="0.9" height="54.5" fill="#cfcfcf" />
<rect x="20.3" y="475" width="805.4" height="0.9" fill="#9a9a9a" />
<rect x="20.3" y="475" width="0.9" height="54.5" fill="#a0a0a0" />
<rect x="817" y="476" width="8.4" height="53" fill="#f0f0f0" />
<path d="M819.2 482 L821 480.2 L822.8 482" stroke="#606060" stroke-width="0.9" fill="none"/>
<path d="M819.2 525 L821 526.8 L822.8 525" stroke="#606060" stroke-width="0.9" fill="none"/>
<rect x="817.6" y="511" width="7" height="9.5" fill="#cdcdcd" />
<text x="22.3" y="482.3" font-family="'Liberation Mono', monospace" font-size="6.5" fill="#2f9a33" textLength="424.94" lengthAdjust="spacingAndGlyphs" stroke="#2f9a33" stroke-width="0.22">Loading shader "C:/Users/dominykas/Documents/Leadwerks/Projects/RedWoods/Shaders/Lighting/directionallight.shader"...</text>
<text x="22.3" y="489.57" font-family="'Liberation Mono', monospace" font-size="6.5" fill="#2f9a33" textLength="377.73" lengthAdjust="spacingAndGlyphs" stroke="#2f9a33" stroke-width="0.22">Loading shader "C:/Users/dominykas/Documents/Leadwerks/Projects/RedWoods/Shaders/Editor/solid.shader"...</text>
<text x="22.3" y="496.84000000000003" font-family="'Liberation Mono', monospace" font-size="6.5" fill="#2f9a33" textLength="370.46" lengthAdjust="spacingAndGlyphs" stroke="#2f9a33" stroke-width="0.22">Deleting shader "C:/Users/dominykas/Documents/Leadwerks/Projects/RedWoods/Shaders/Editor/solid.shader"</text>
<text x="22.3" y="504.11" font-family="'Liberation Mono', monospace" font-size="6.5" fill="#2f9a33" textLength="410.42" lengthAdjust="spacingAndGlyphs" stroke="#2f9a33" stroke-width="0.22">Deleting material "C:/Users/dominykas/Documents/Leadwerks/Projects/RedWoods/Materials/Icons/directionallight.mat"</text>
<text x="22.3" y="511.38" font-family="'Liberation Mono', monospace" font-size="6.5" fill="#2f9a33" textLength="374.1" lengthAdjust="spacingAndGlyphs" stroke="#2f9a33" stroke-width="0.22">Deleting shader "C:/Users/dominykas/Documents/Leadwerks/Projects/RedWoods/Shaders/Editor/sprite.shader"</text>
<text x="22.3" y="518.65" font-family="'Liberation Mono', monospace" font-size="6.5" fill="#2f9a33" textLength="406.78" lengthAdjust="spacingAndGlyphs" stroke="#2f9a33" stroke-width="0.22">Deleting texture "C:/Users/dominykas/Documents/Leadwerks/Projects/RedWoods/Materials/Icons/directionallight.tex"</text>
<text x="22.3" y="525.92" font-family="'Liberation Mono', monospace" font-size="6.5" fill="#2f9a33" textLength="323.25" lengthAdjust="spacingAndGlyphs" stroke="#2f9a33" stroke-width="0.22">Loading map "C:\Users\dominykas\Documents\Leadwerks\Projects\RedWoods\Maps\temp11.map"...</text>
<rect x="0" y="529.5" width="1000" height="11.5" fill="#f0f0f0" />
<text x="1.4" y="539.9" font-family="'Liberation Sans', sans-serif" font-size="7.4" fill="#1a1a1a" textLength="45.4" lengthAdjust="spacingAndGlyphs" >Press F1 for Help</text>
<rect x="145.3" y="530.5" width="0.8" height="10.5" fill="#d9d9d9" />
<rect x="146.10000000000002" y="530.5" width="0.7" height="10.5" fill="#fafafa" />
<rect x="239" y="530.5" width="0.8" height="10.5" fill="#d9d9d9" />
<rect x="239.8" y="530.5" width="0.7" height="10.5" fill="#fafafa" />
<rect x="332.8" y="530.5" width="0.8" height="10.5" fill="#d9d9d9" />
<rect x="333.6" y="530.5" width="0.7" height="10.5" fill="#fafafa" />
<rect x="426" y="530.5" width="0.8" height="10.5" fill="#d9d9d9" />
<rect x="426.8" y="530.5" width="0.7" height="10.5" fill="#fafafa" />
<rect x="520" y="530.5" width="0.8" height="10.5" fill="#d9d9d9" />
<rect x="520.8" y="530.5" width="0.7" height="10.5" fill="#fafafa" />
</svg></body></html>
